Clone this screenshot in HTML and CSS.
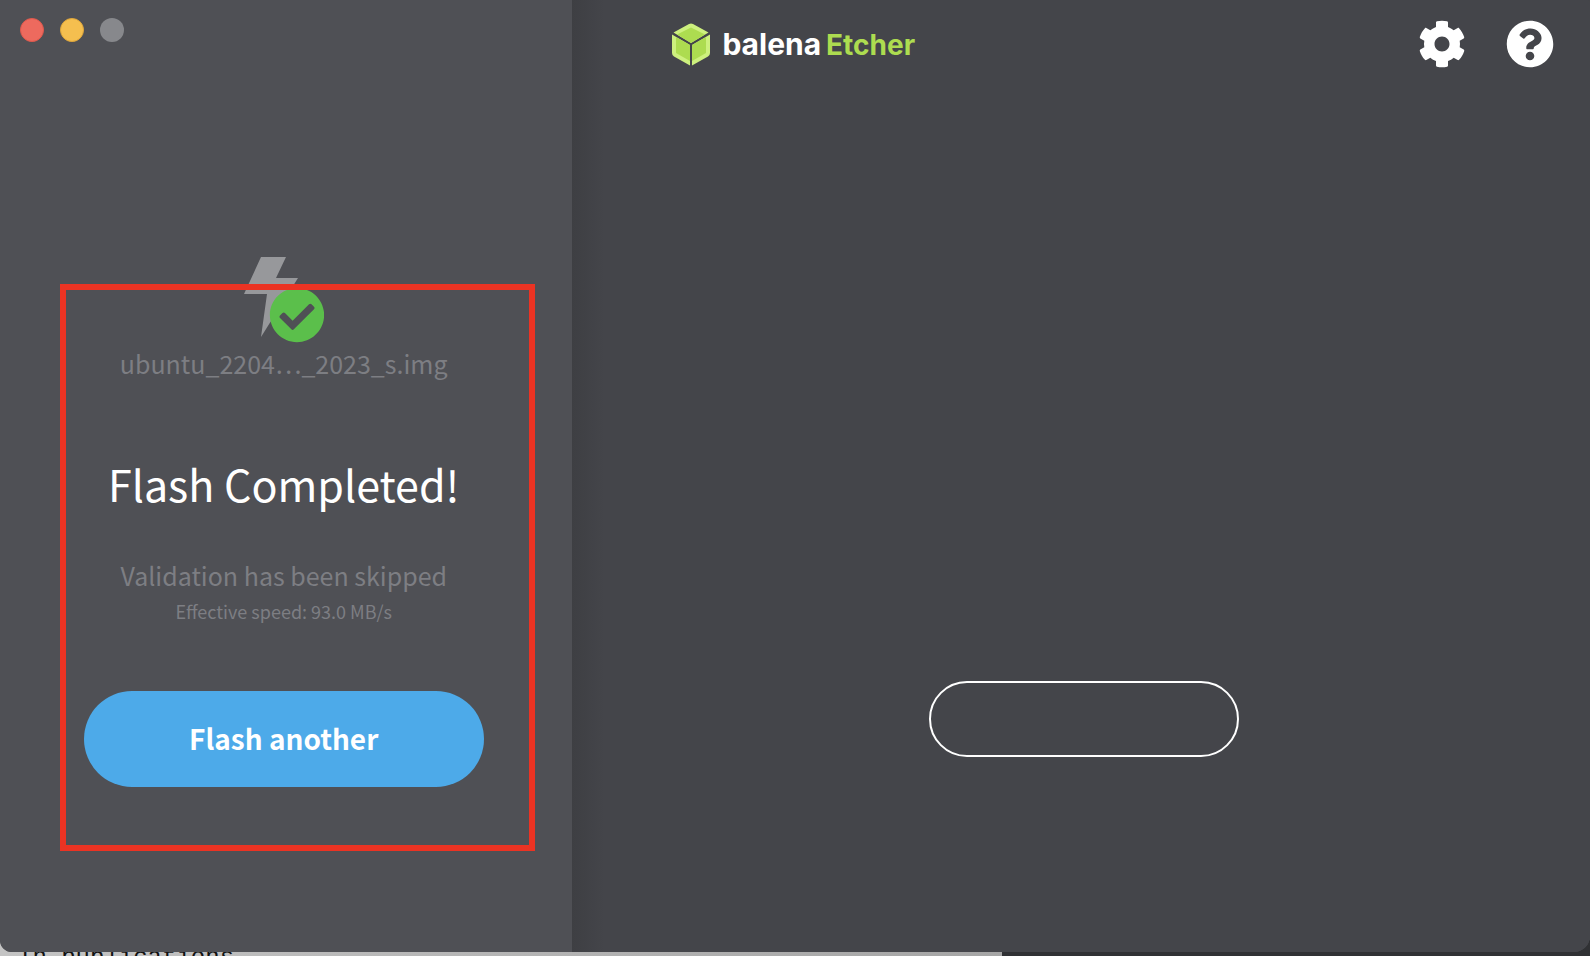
FILE: index.html
```html
<!DOCTYPE html>
<html lang="en">
<head>
<meta charset="utf-8">
<title>balenaEtcher</title>
<link rel="stylesheet" href="styles.css">
</head>
<body>
<div class="backdrop" aria-hidden="true"><span class="backdrop-text">In publications</span></div>
<div class="window">
  <section class="result">
    <div class="lights">
      <button class="light light-close" aria-label="Close"></button>
      <button class="light light-minimize" aria-label="Minimize"></button>
      <button class="light light-zoom" aria-label="Zoom" disabled></button>
    </div>
    <div class="summary">
      <svg class="flash-icon" viewBox="0 0 80 86" aria-hidden="true">
        <path class="bolt" d="M17 0H42L32 21H54L17 80L23 37H0z"/>
        <circle class="check-back" cx="53" cy="58" r="26"/>
        <path class="check" transform="translate(25 30) scale(.1094)" d="M504 256c0 136.967-111.033 248-248 248S8 392.967 8 256 119.033 8 256 8s248 111.033 248 248zM227.314 387.314l184-184c6.248-6.248 6.248-16.379 0-22.627l-22.627-22.627c-6.248-6.249-16.379-6.249-22.628 0L216 308.118l-70.059-70.059c-6.248-6.248-16.379-6.248-22.628 0l-22.627 22.627c-6.248 6.248-6.248 16.379 0 22.627l104 104c6.249 6.249 16.379 6.249 22.628.001z"/>
      </svg>
      <p class="filename">ubuntu_2204…_2023_s.img</p>
      <h1 class="title">Flash Completed!</h1>
      <p class="note">Validation has been skipped</p>
      <p class="speed">Effective speed: 93.0 MB/s</p>
      <button class="flash-another">Flash another</button>
    </div>
    <div class="highlight"></div>
  </section>
  <main class="stage">
    <header class="topbar">
      <div class="brand">
        <svg class="cube" viewBox="0 0 40 43" aria-hidden="true">
          <path class="cube-edge" d="M18 1Q20 0 22 1L37.500 9.500L20 20L2.500 9.500zM1 11.500L19 22V42.500L3 33.500Q1 32.500 1 30zM39 11.500L21 22V42.500L37 33.500Q39 32.500 39 30z"/>
          <path class="cube-face" d="M20 4.500L34 11.500L20 20L6 11.500zM5 14L19 22V38L5 30zM35 14L21 22V38L35 30z"/>
        </svg>
        <span class="wordmark"><span class="wordmark-maker">balena</span><span class="wordmark-accent">Etcher</span></span>
      </div>
      <nav class="actions">
        <button class="icon-button" aria-label="Settings">
          <svg viewBox="0 0 512 512"><path d="M487.400 315.700l-42.600-24.600c4.300-23.200 4.300-47 0-70.200l42.600-24.600c4.900-2.800 7.100-8.600 5.500-14-11.100-35.600-30-67.800-54.700-94.600-3.800-4.100-10-5.100-14.800-2.300L380.800 110c-17.900-15.400-38.500-27.300-60.800-35.100V25.800c0-5.600-3.900-10.500-9.400-11.700-36.700-8.200-74.300-7.800-109.200 0-5.500 1.200-9.400 6.100-9.400 11.700V75c-22.200 7.900-42.800 19.800-60.800 35.100L88.700 85.500c-4.900-2.800-11-1.900-14.800 2.300-24.700 26.700-43.600 58.900-54.700 94.600-1.700 5.400.6 11.200 5.500 14L67.300 221c-4.300 23.200-4.300 47 0 70.200l-42.600 24.600c-4.900 2.800-7.100 8.600-5.500 14 11.100 35.600 30 67.800 54.700 94.600 3.800 4.100 10 5.100 14.800 2.300l42.600-24.600c17.900 15.400 38.500 27.300 60.800 35.100v49.200c0 5.600 3.900 10.500 9.400 11.700 36.700 8.200 74.300 7.800 109.200 0 5.500-1.200 9.400-6.100 9.400-11.700v-49.200c22.200-7.900 42.800-19.800 60.800-35.100l42.600 24.600c4.900 2.800 11 1.900 14.800-2.300 24.700-26.700 43.600-58.900 54.700-94.600 1.500-5.500-.7-11.300-5.600-14.100zM256 336c-44.100 0-80-35.900-80-80s35.900-80 80-80 80 35.900 80 80-35.900 80-80 80z"/></svg>
        </button>
        <button class="icon-button" aria-label="Help">
          <svg viewBox="0 0 512 512"><path d="M504 256c0 136.997-111.043 248-248 248S8 392.997 8 256C8 119.083 119.043 8 256 8s248 111.083 248 248zM262.655 90c-54.497 0-89.255 22.957-116.549 63.758-3.536 5.286-2.353 12.415 2.715 16.258l34.699 26.310c5.205 3.947 12.621 3.008 16.665-2.122 17.864-22.658 30.113-35.797 57.303-35.797 20.429 0 45.698 13.148 45.698 32.958 0 14.976-12.363 22.667-32.534 33.976C247.128 238.528 216 254.941 216 296v4c0 6.627 5.373 12 12 12h56c6.627 0 12-5.373 12-12v-1.333c0-28.462 83.186-29.647 83.186-106.667 0-58.002-60.165-102-116.531-102zM256 338c-25.365 0-46 20.635-46 46 0 25.364 20.635 46 46 46s46-20.636 46-46c0-25.364-20.635-46-46-46z"/></svg>
        </button>
      </nav>
    </header>
    <div class="stage-body">
      <button class="outline-button" aria-label="Continue"></button>
    </div>
  </main>
</div>
</body>
</html>
```
FILE: styles.css
```css
* { box-sizing: border-box; }

body {
  margin: 0;
  min-height: 100vh;
  display: flex;
  position: relative;
  background: #444549;
  font-family: "Noto Sans CJK SC", "Noto Sans", sans-serif;
  color: #fff;
}

button {
  border: 0;
  padding: 0;
  background: none;
  color: inherit;
  font: inherit;
}

h1, p { margin: 0; }

.backdrop {
  position: absolute;
  left: 0;
  right: 0;
  bottom: 0;
  height: 16px;
  padding: 12px 18px 0;
  overflow: hidden;
  background: linear-gradient(90deg, #c4c4c4 0, #a5a5a5 63%, #303134 63%, #303134 100%);
}

.backdrop-text {
  display: block;
  color: #111;
  font: 24px/12px "Liberation Mono", monospace;
}

.window {
  flex: 1;
  display: flex;
  position: relative;
  margin-bottom: 4px;
  overflow: hidden;
  border-radius: 0 2px 16px 12px;
  background: #444549;
}

.result {
  flex: 0 0 36%;
  display: flex;
  flex-direction: column;
  position: relative;
  background: #4f5055;
}

.lights {
  display: flex;
  gap: 16px;
  padding: 18px 20px;
}

.light {
  width: 24px;
  height: 24px;
  border-radius: 50%;
}

.light-close { background: #ed6a5e; border: 1px solid #e0584c; }
.light-minimize { background: #f5bf4f; border: 1px solid #dfa63a; }
.light-zoom { background: #87888c; }

.summary {
  display: flex;
  flex-direction: column;
  align-items: center;
  padding: 197px 5px 0 0;
}

.flash-icon { width: 80px; height: 86px; }
.bolt { fill: #97989b; }
.check-back { fill: #4f5055; }
.check { fill: #5bbf4b; }

.filename,
.note {
  color: #7d7e83;
  font-size: 25px;
  line-height: 36px;
}

.filename { margin-top: 2px; }

.title {
  margin-top: 70px;
  font-size: 43px;
  font-weight: 400;
  line-height: 64px;
}

.note { margin-top: 42px; }

.speed {
  margin-top: 4px;
  color: #7d7e83;
  font-size: 18px;
  line-height: 28px;
}

.flash-another {
  width: 400px;
  height: 96px;
  margin-top: 66px;
  padding-bottom: 2px;
  border-radius: 48px;
  background: #4daae9;
  font-size: 28px;
  font-weight: 700;
}

.highlight {
  position: absolute;
  inset: 284px 37px 101px 60px;
  border: 6px solid #eb3323;
  pointer-events: none;
}

.stage {
  flex: 1;
  display: flex;
  flex-direction: column;
  background: linear-gradient(90deg, #3e3f43, #44454a 32px);
}

.topbar {
  display: flex;
  justify-content: space-between;
  align-items: center;
  padding: 20px 36px 0 99px;
}

.brand {
  display: flex;
  align-items: center;
  gap: 11px;
}

.cube { width: 40px; height: 43px; }
.cube-edge { fill: #cdf07e; }
.cube-face { fill: #addc50; }

.wordmark {
  display: flex;
  align-items: baseline;
  gap: 5px;
  font: 700 28px/36px Inter, sans-serif;
}

.wordmark-maker { font-size: 30px; }
.wordmark-accent { color: #addc50; }

.actions {
  display: flex;
  gap: 40px;
}

.icon-button { width: 48px; height: 48px; }
.icon-button svg { display: block; fill: #fff; }

.stage-body {
  flex: 1;
  display: flex;
  justify-content: center;
  align-items: flex-end;
  padding: 0 0 195px 5px;
}

.outline-button {
  width: 310px;
  height: 76px;
  border: 2px solid #fff;
  border-radius: 38px;
}
```
